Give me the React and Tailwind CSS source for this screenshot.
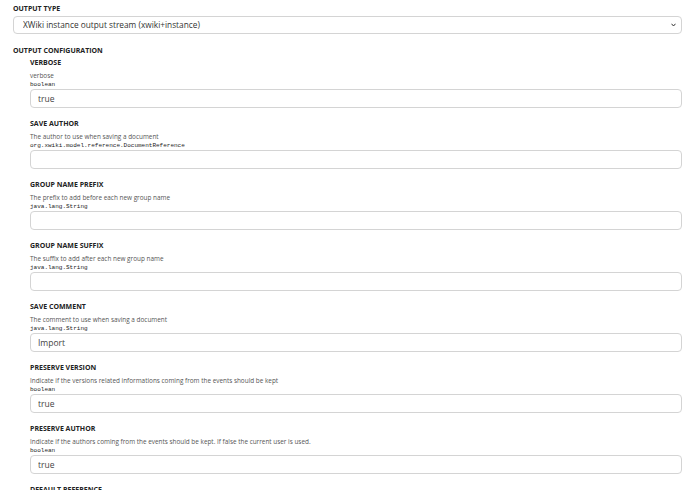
import { useState } from "react"

const fields = [
   { key: "verbose", label: "VERBOSE", desc: "verbose", type: "boolean", value: "true" },
   { key: "author", label: "SAVE AUTHOR", desc: "The author to use when saving a document", type: "org.xwiki.model.reference.DocumentReference", value: "" },
   { key: "prefix", label: "GROUP NAME PREFIX", desc: "The prefix to add before each new group name", type: "java.lang.String", value: "" },
   { key: "suffix", label: "GROUP NAME SUFFIX", desc: "The suffix to add after each new group name", type: "java.lang.String", value: "" },
   { key: "comment", label: "SAVE COMMENT", desc: "The comment to use when saving a document", type: "java.lang.String", value: "Import" },
   { key: "version", label: "PRESERVE VERSION", desc: "Indicate if the versions related informations coming from the events should be kept", type: "boolean", value: "true" },
   { key: "pauthor", label: "PRESERVE AUTHOR", desc: "Indicate if the authors coming from the events should be kept. If false the current user is used.", type: "boolean", value: "true" },
   { key: "defref", label: "DEFAULT REFERENCE", desc: "The default reference to use when none is provided", type: "org.xwiki.model.reference.EntityReference", value: "" },
]

function Field({ field }) {
   const [value, setValue] = useState(field.value)
   return (
      <div className="flex flex-col mb-[11px]">
         <label htmlFor={field.key} className="text-[7px] leading-[10px] font-bold text-[#222]">{field.label}</label>
         <p className="mt-[2px] text-[6.4px] leading-[11px] text-[#555]">{field.desc}</p>
         <p className="text-[6px] leading-[8px] text-[#222] font-['Liberation_Mono',monospace]">{field.type}</p>
         <input
            id={field.key}
            type="text"
            value={value}
            onChange={(e) => setValue(e.target.value)}
            className="block h-[19px] w-full border border-[#d4d4d4] rounded-[4px] bg-white px-[7px] text-[8.5px] text-[#444] outline-none"
         />
      </div>
   )
}

export default function App() {
   return (
      <main className="min-h-[490px] bg-white pt-[4px] pl-[13px] pr-[8px] font-['Open_Sans',sans-serif]">
         {/* Output type */}
         <label className="block text-[7px] leading-[10px] font-bold text-[#222]">OUTPUT TYPE</label>
         <div className="relative mt-[2px]">
            <select className="block appearance-none h-[18px] w-full border border-[#d4d4d4] rounded-[4px] bg-white pl-[9px] text-[8.3px] text-[#333] outline-none">
               <option>XWiki instance output stream (xwiki+instance)</option>
            </select>
            <svg className="absolute right-[6px] top-[7px] w-[5px] h-[4px]" viewBox="0 0 10 8">
               <path d="M1 1.5 L5 6 L9 1.5" fill="none" stroke="#333" strokeWidth="2" />
            </svg>
         </div>

         {/* Output configuration */}
         <h2 className="mt-[12px] text-[7px] leading-[10px] font-bold text-[#222]">OUTPUT CONFIGURATION</h2>
         <div className="mt-[2px] pl-[17px]">
            {fields.map((f) => <Field key={f.key} field={f} />)}
         </div>
      </main>
   )
}
